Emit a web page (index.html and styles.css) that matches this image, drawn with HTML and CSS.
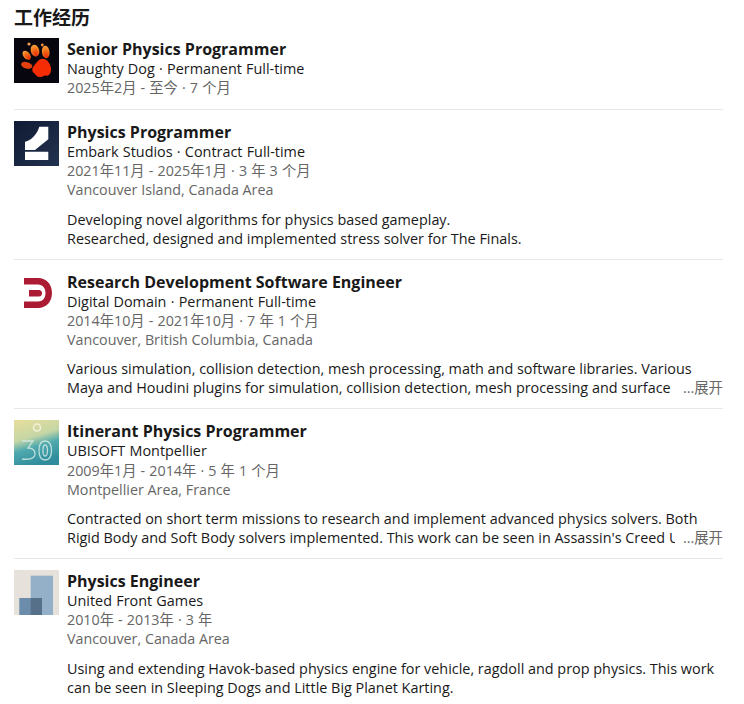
FILE: index.html
```html
<!DOCTYPE html>
<html lang="zh">
<head>
<meta charset="utf-8">
<title>工作经历</title>
<link rel="stylesheet" href="styles.css">
</head>
<body>
<section class="experience">
  <h2 class="heading">工作经历</h2>
  <article class="job">
    <svg class="logo" viewBox="0 0 45 45"><defs><radialGradient id="toe" cx=".5" cy=".85" r=".9"><stop offset="0" stop-color="#e8300a"/><stop offset=".55" stop-color="#f2701a"/><stop offset="1" stop-color="#f8b04a"/></radialGradient></defs><rect width="45" height="45" fill="#07060f"/><circle cx="15" cy="6" r="1.600" fill="#f6a050"/><circle cx="28.300" cy="7" r="1.400" fill="#f09040"/><ellipse cx="21" cy="12.700" rx="4.200" ry="6" transform="rotate(-15 21 12.700)" fill="url(#toe)"/><ellipse cx="31.700" cy="14" rx="3.800" ry="6.200" transform="rotate(-8 31.700 14)" fill="url(#toe)"/><ellipse cx="12.700" cy="17.300" rx="3.300" ry="5.200" transform="rotate(-40 12.700 17.300)" fill="url(#toe)"/><ellipse cx="12.700" cy="27.300" rx="5.800" ry="3.200" transform="rotate(15 12.700 27.300)" fill="#e2400c"/><path d="M28.500 20.700C33 20.700 36 25 37 30 37.500 35 35 38.500 32 37.500 30 37 29 38.500 27 39 23 39.500 22 37 20.500 35.500 18 34 17.500 31 19.500 28.500 22 25.500 24.500 20.700 28.500 20.700z" fill="#f62c05"/></svg>
    <div class="info">
      <h3 class="title">Senior Physics Programmer</h3>
      <p class="company">Naughty Dog · Permanent Full-time</p>
      <p class="meta date">2025年2月 - 至今 · 7 个月</p>
    </div>
  </article>
  <article class="job">
    <svg class="logo" viewBox="0 0 45 45"><defs><linearGradient id="emb" x1="0" y1="0" x2="1" y2="1"><stop offset="0" stop-color="#101a33"/><stop offset="1" stop-color="#22324f"/></linearGradient></defs><rect width="45" height="45" fill="url(#emb)"/><path d="M25.300 5.700H34.300V18.300L21 29H11V20.700C18 19 23 13 25.300 5.700zM11 30.700H34.300V39H11z" fill="#fff"/></svg>
    <div class="info">
      <h3 class="title">Physics Programmer</h3>
      <p class="company">Embark Studios · Contract Full-time</p>
      <p class="meta date">2021年11月 - 2025年1月 · 3 年 3 个月</p>
      <p class="meta">Vancouver Island, Canada Area</p>
      <p class="desc">Developing novel algorithms for physics based gameplay.<br>Researched, designed and implemented stress solver for The Finals.</p>
    </div>
  </article>
  <article class="job">
    <svg class="logo" viewBox="0 0 45 45"><rect width="45" height="45" fill="#fff"/><path d="M10 7H24C32.500 7 38 13.500 38 22 38 30.500 32.500 37 24 37H10V30.500H24C28.500 30.500 31.500 27 31.500 22 31.500 17 28.500 13.500 24 13.500H10zM15 19H25C27 19 28 20.500 28 22.200S27 25.500 25 25.500H15z" fill="#ab1b33"/></svg>
    <div class="info">
      <h3 class="title">Research Development Software Engineer</h3>
      <p class="company">Digital Domain · Permanent Full-time</p>
      <p class="meta date">2014年10月 - 2021年10月 · 7 年 1 个月</p>
      <p class="meta">Vancouver, British Columbia, Canada</p>
      <div class="desc clamp">
        <p class="line">Various simulation, collision detection, mesh processing, math and software libraries. Various</p>
        <p class="line cut"><span class="cut-text">Maya and Houdini plugins for simulation, collision detection, mesh processing and surface</span><span class="more">...展开</span></p>
      </div>
    </div>
  </article>
  <article class="job">
    <svg class="logo" viewBox="0 0 45 45"><defs><linearGradient id="ubi" x1=".2" y1="0" x2=".5" y2="1"><stop offset="0" stop-color="#e4dd9c"/><stop offset=".4" stop-color="#c5d6a6"/><stop offset=".62" stop-color="#4fa9ae"/><stop offset="1" stop-color="#2e8c9c"/></linearGradient></defs><rect width="45" height="45" fill="url(#ubi)"/><circle cx="23" cy="7.500" r="3.500" fill="none" stroke="#f3f1d6" stroke-width="1.500"/><path d="M8 21H19L14 28C18 28 21 30 21 34 21 38 16 40 8 39M31 21C26 21 25 26 25 30.500S26 40 31 40 37.500 35 37.500 30.500 36 21 31 21zM31 25C29 25 29 28 29 30.500S29 36 31 36 33.500 33 33.500 30.500 33 25 31 25z" fill="none" stroke="#dcefe8" stroke-opacity=".8" stroke-width="1.300"/></svg>
    <div class="info">
      <h3 class="title">Itinerant Physics Programmer</h3>
      <p class="company">UBISOFT Montpellier</p>
      <p class="meta date">2009年1月 - 2014年 · 5 年 1 个月</p>
      <p class="meta">Montpellier Area, France</p>
      <div class="desc clamp">
        <p class="line">Contracted on short term missions to research and implement advanced physics solvers. Both</p>
        <p class="line cut"><span class="cut-text">Rigid Body and Soft Body solvers implemented. This work can be seen in Assassin's Creed Unity</span><span class="more">...展开</span></p>
      </div>
    </div>
  </article>
  <article class="job">
    <svg class="logo" viewBox="0 0 45 45"><rect width="45" height="45" fill="#e6e1da"/><rect x="16.700" y="5.700" width="22.300" height="39.300" fill="#93b0c8"/><rect x="5.300" y="28" width="22.700" height="17" fill="#6c8cab"/><rect x="16.700" y="28" width="11.300" height="17" fill="#567089"/></svg>
    <div class="info">
      <h3 class="title">Physics Engineer</h3>
      <p class="company">United Front Games</p>
      <p class="meta date">2010年 - 2013年 · 3 年</p>
      <p class="meta">Vancouver, Canada Area</p>
      <p class="desc">Using and extending Havok-based physics engine for vehicle, ragdoll and prop physics. This work can be seen in Sleeping Dogs and Little Big Planet Karting.</p>
    </div>
  </article>
</section>
</body>
</html>
```

FILE: styles.css
```css
* { box-sizing: border-box; }
html, body { margin: 0; padding: 0; background: #fff; }
body {
  font-family: "Open Sans", "Noto Sans CJK SC", sans-serif;
  color: #191919;
}
.experience { width: 723px; padding: 5px 0 0 14px; }
.heading {
  margin: 0 0 9px;
  font-family: "Noto Sans CJK SC", sans-serif;
  font-size: 19px;
  line-height: 24px;
  font-weight: 700;
}
.job {
  display: flex;
  gap: 8px;
  padding-bottom: 10.67px;
  margin-bottom: 11px;
  border-bottom: 1px solid #e8e8e8;
}
.job:first-of-type { padding-bottom: 11.6px; }
.job:last-child { border-bottom: 0; }
.logo { width: 45px; height: 45px; flex: none; display: block; }
.info { flex: 1; min-width: 0; }
.title { margin: 0; padding-top: 2px; font-size: 16px; line-height: 19px; font-weight: 700; }
.company { margin: 0; font-size: 14.4px; line-height: 19.2px; word-spacing: 0.5px; }
.meta { margin: 0; font-size: 14.3px; line-height: 19.2px; color: #666; }
.date { word-spacing: 0.4px; }
.desc { margin: 0; padding-top: 10px; font-size: 14.4px; line-height: 19.2px; }
.line { margin: 0; white-space: nowrap; }
.cut { display: flex; }
.cut-text { flex: 1; min-width: 0; overflow: hidden; }
.more { flex: none; margin-left: 8px; color: #666; }
```
